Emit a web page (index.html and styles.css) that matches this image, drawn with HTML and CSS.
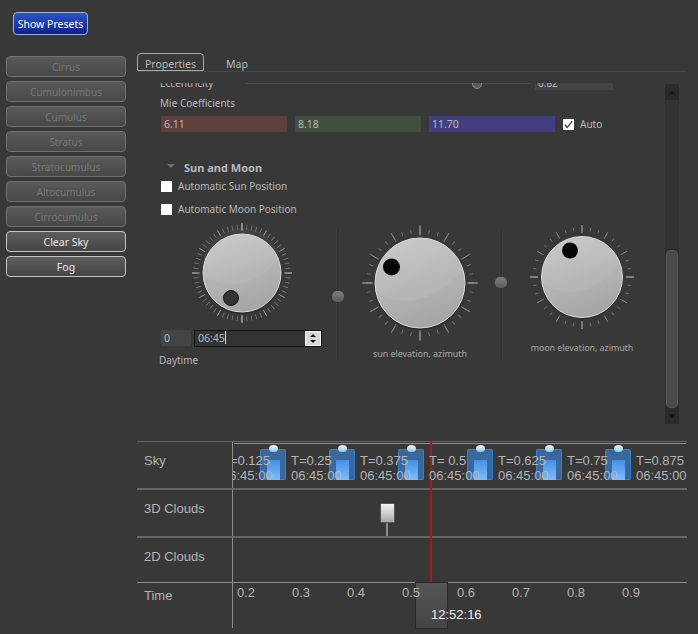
FILE: index.html
```html
<!DOCTYPE html>
<html lang="en">
<head>
    <meta charset="UTF-8">
    <title>Sky Editor</title>
    <link rel="stylesheet" href="styles.css">
</head>
<body>
    <div class="top">
        <button class="show-presets">Show Presets</button>
    </div>
    <div class="workspace">
        <div class="presets">
            <button class="preset" disabled>Cirrus</button>
            <button class="preset" disabled>Cumulonimbus</button>
            <button class="preset" disabled>Cumulus</button>
            <button class="preset" disabled>Stratus</button>
            <button class="preset" disabled>Stratocumulus</button>
            <button class="preset" disabled>Altocumulus</button>
            <button class="preset" disabled>Cirrocumulus</button>
            <button class="preset">Clear Sky</button>
            <button class="preset">Fog</button>
        </div>
        <div class="editor">
            <div class="tabs">
                <div class="tab active">Properties</div>
                <div class="tab">Map</div>
            </div>
            <div class="panel">
                <div class="panel-body">
                    <div class="ecc-row">
                        <span class="ecc-label">Eccentricity</span>
                        <div class="ecc-track"><div class="ecc-handle"></div></div>
                        <div class="ecc-field">0.82</div>
                    </div>
                    <div class="mie-label">Mie Coefficients</div>
                    <div class="mie-row">
                        <div class="mie red">6.11</div>
                        <div class="mie green">8.18</div>
                        <div class="mie blue">11.70</div>
                        <label class="check auto"><span class="box"><svg width="13" height="13" viewBox="0 0 13 13"><path d="M2 6.5 L5 10 L11 2.5" fill="none" stroke="#444" stroke-width="1.6"/></svg></span>Auto</label>
                    </div>
                    <div class="section-head"><span class="triangle"></span>Sun and Moon</div>
                    <label class="check sun-check"><span class="box"></span>Automatic Sun Position</label>
                    <label class="check moon-check"><span class="box"></span>Automatic Moon Position</label>

                    <div class="dials">
                        <div class="dial-col day-col">
                            <svg class="day-dial" width="110" height="110" viewBox="0 0 110 110">
                                <defs>
                                    <linearGradient id="knob" x1="0.3" y1="0" x2="0.6" y2="1">
                                        <stop offset="0" stop-color="#c6c6c6"/>
                                        <stop offset="1" stop-color="#a4a4a4"/>
                                    </linearGradient>
                                </defs>
                                <circle cx="55" cy="55" r="46" fill="none" stroke="#858585" stroke-width="5" pathLength="360" stroke-dasharray="0.9 5.1" stroke-dashoffset="0.45"/>
                                <circle cx="55" cy="55" r="46" fill="none" stroke="#a0a0a0" stroke-width="7" pathLength="360" stroke-dasharray="0.9 29.1" stroke-dashoffset="0.45"/>
                                <circle cx="55" cy="55" r="46" fill="none" stroke="#bdbdbd" stroke-width="8" pathLength="360" stroke-dasharray="1 89" stroke-dashoffset="0.5"/>
                                <circle cx="55" cy="56" r="40" fill="#2c2c2c"/>
                                <circle cx="55" cy="55" r="39" fill="url(#knob)" stroke="#dcdcdc" stroke-width="1"/>
                                <path d="M17 58 Q55 82 93 40 A39 39 0 0 0 17 58Z" fill="#fff" opacity="0.05"/>
                                <circle cx="44" cy="80" r="7.5" fill="#333" stroke="#111" stroke-width="1"/>
                            </svg>
                            <div class="time-row">
                                <div class="day-field">0</div>
                                <div class="spin">
                                    <span class="spin-text">06:45<i class="caret"></i></span>
                                    <div class="spin-btns"><span class="arrow up"></span><span class="arrow down"></span></div>
                                </div>
                            </div>
                            <div class="day-label">Daytime</div>
                        </div>
                        <div class="v-slider"><div class="v-handle sun-handle"></div></div>
                        <div class="dial-col sun-col">
                            <svg width="120" height="120" viewBox="0 0 120 120">
                                <circle cx="60" cy="60" r="52" fill="none" stroke="#747474" stroke-width="4" pathLength="360" stroke-dasharray="1 9" stroke-dashoffset="0.5"/>
                                <circle cx="60" cy="60" r="52.5" fill="none" stroke="#858585" stroke-width="10" pathLength="360" stroke-dasharray="1 29" stroke-dashoffset="0.5"/>
                                <circle cx="60" cy="60" r="52.5" fill="none" stroke="#9c9c9c" stroke-width="10" pathLength="360" stroke-dasharray="1 89" stroke-dashoffset="0.5"/>
                                <circle cx="60" cy="61" r="46" fill="#2c2c2c"/>
                                <circle cx="60" cy="60" r="45" fill="url(#knob)" stroke="#dcdcdc" stroke-width="1"/>
                                <path d="M16 68 Q60 96 103 46 A45 45 0 0 0 16 68Z" fill="#fff" opacity="0.05"/>
                                <circle cx="31.5" cy="44" r="8.5" fill="#050505"/>
                            </svg>
                            <div class="dial-label">sun elevation, azimuth</div>
                        </div>
                        <div class="v-slider moon-slider"><div class="v-handle moon-handle"></div></div>
                        <div class="dial-col moon-col">
                            <svg width="110" height="110" viewBox="0 0 110 110">
                                <circle cx="55" cy="55" r="48" fill="none" stroke="#747474" stroke-width="3.5" pathLength="360" stroke-dasharray="1 9" stroke-dashoffset="0.5"/>
                                <circle cx="55" cy="55" r="48" fill="none" stroke="#858585" stroke-width="8" pathLength="360" stroke-dasharray="1 29" stroke-dashoffset="0.5"/>
                                <circle cx="55" cy="55" r="48" fill="none" stroke="#9c9c9c" stroke-width="8" pathLength="360" stroke-dasharray="1 89" stroke-dashoffset="0.5"/>
                                <circle cx="55" cy="56" r="41.5" fill="#2c2c2c"/>
                                <circle cx="55" cy="55" r="40.5" fill="url(#knob)" stroke="#dcdcdc" stroke-width="1"/>
                                <path d="M15 61 Q55 86 93 42 A40.5 40.5 0 0 0 15 61Z" fill="#fff" opacity="0.05"/>
                                <circle cx="43" cy="28.5" r="8" fill="#050505"/>
                            </svg>
                            <div class="dial-label">moon elevation, azimuth</div>
                        </div>
                    </div>
                </div>
                <div class="scrollbar">
                    <div class="scroll-btn"><span class="arrow up dark"></span></div>
                    <div class="scroll-track"><div class="scroll-thumb"></div></div>
                    <div class="scroll-btn"><span class="arrow down dark"></span></div>
                </div>
            </div>
        </div>
    </div>

    <div class="timeline">
        <div class="row sky-row">
            <div class="row-label">Sky</div>
            <div class="track">
                <div class="sky-bar"></div>
                <div class="clips">
                    <div class="clip"><span class="clip-icon"></span><span class="clip-text">T=0.125<br>06:45:00</span></div>
                    <div class="clip"><span class="clip-icon"></span><span class="clip-text">T=0.25<br>06:45:00</span></div>
                    <div class="clip"><span class="clip-icon"></span><span class="clip-text">T=0.375<br>06:45:00</span></div>
                    <div class="clip"><span class="clip-icon"></span><span class="clip-text">T= 0.5<br>06:45:00</span></div>
                    <div class="clip"><span class="clip-icon"></span><span class="clip-text">T=0.625<br>06:45:00</span></div>
                    <div class="clip"><span class="clip-icon"></span><span class="clip-text">T=0.75<br>06:45:00</span></div>
                    <div class="clip"><span class="clip-text">T=0.875<br>06:45:00</span></div>
                </div>
            </div>
        </div>
        <div class="row clouds-row">
            <div class="row-label">3D Clouds</div>
            <div class="track"><div class="key"></div></div>
        </div>
        <div class="row flat-row">
            <div class="row-label">2D Clouds</div>
            <div class="track"></div>
        </div>
        <div class="row time-ruler">
            <div class="row-label">Time</div>
            <div class="track ticks">
                <span>0.2</span><span>0.3</span><span>0.4</span><span>0.5</span><span>0.6</span><span>0.7</span><span>0.8</span><span>0.9</span>
            </div>
        </div>
        <div class="playhead-line"></div>
        <div class="playhead"></div>
        <div class="playhead-time">12:52:16</div>
    </div>
</body>
</html>
```

FILE: styles.css
```css
* {
    box-sizing: border-box;
}
body {
    margin: 0;
    height: 634px;
    overflow: hidden;
    background: #383838;
    color: #b8b8b8;
    font-family: "Noto Sans", sans-serif;
    font-size: 10px;
}
button {
    font-family: inherit;
    font-size: 10.5px;
    padding: 0;
}

.top {
    height: 53px;
    padding: 12px 0 0 13px;
}
.show-presets {
    display: block;
    width: 75px;
    height: 23px;
    padding-top: 1px;
    color: #fff;
    background: linear-gradient(#2a56c8, #10208c);
    border: 1px solid #9db0d8;
    border-radius: 4px;
}

.workspace {
    display: flex;
    height: 388px;
}
.presets {
    width: 137px;
    padding: 3px 0 0 6px;
    display: flex;
    flex-direction: column;
    gap: 4px;
}
.preset {
    width: 120px;
    height: 21px;
    color: #e8e8e8;
    background: linear-gradient(#5e5e5e, #454545);
    border: 1px solid #c4c4c4;
    border-radius: 4px;
}
.preset:disabled {
    font-size: 10px;
    color: #757575;
    background: linear-gradient(#5a5a5a, #484848);
    border-color: #707070;
}

.editor {
    width: 550px;
}
.tabs {
    display: flex;
    height: 19px;
    border-bottom: 1px solid #474747;
    font-size: 10.5px;
}
.tab {
    height: 18px;
    line-height: 22px;
    padding: 0 22px 0 0;
}
.tab.active {
    width: 67px;
    margin-right: 22px;
    padding: 0;
    text-align: center;
    border: 1px solid #a8a8a8;
    border-radius: 4px 4px 0 0;
    line-height: 20px;
}

.panel {
    display: flex;
    height: 358px;
    margin-top: 11px;
    overflow: hidden;
    position: relative;
}
.panel-body {
    width: 528px;
    margin-top: -8px;
    padding-left: 23px;
}

.ecc-row {
    display: flex;
    height: 14px;
}
.ecc-label {
    width: 85px;
    height: 14px;
    line-height: 16px;
}
.ecc-track {
    width: 286px;
    height: 1px;
    margin-top: 8px;
    background: #4c4c4c;
    position: relative;
}
.ecc-handle {
    position: absolute;
    left: 227px;
    top: -4px;
    width: 10px;
    height: 10px;
    border-radius: 50%;
    background: #5a5a5a;
    border: 1px solid #8a8a8a;
}
.ecc-field {
    width: 78px;
    height: 15px;
    margin-left: 4px;
    padding-left: 3px;
    background: #444;
    line-height: 17px;
}

.mie-label {
    margin-top: 6px;
    height: 16px;
    line-height: 16px;
}
.mie-row {
    display: flex;
    align-items: center;
    gap: 8px;
    margin-top: 5px;
    padding-left: 1px;
    height: 16px;
}
.mie {
    width: 126px;
    height: 16px;
    line-height: 16px;
    padding-left: 3px;
    font-size: 10.5px;
}
.red { background: #5f3e3e; }
.green { background: #3f4f3e; }
.blue { background: #423f80; }

.check {
    display: flex;
    align-items: center;
    gap: 6px;
}
.box {
    width: 11px;
    height: 11px;
    background: #fff;
    display: block;
    flex: none;
}
.box svg {
    display: block;
    width: 11px;
    height: 11px;
}
.section-head {
    display: flex;
    align-items: center;
    margin-top: 27px;
    padding-left: 7px;
    height: 16px;
    font-size: 11px;
    font-weight: 700;
    color: #b8b8b8;
}
.triangle {
    width: 0;
    height: 0;
    margin-right: 9px;
    margin-top: -3px;
    border-left: 4px solid transparent;
    border-right: 4px solid transparent;
    border-top: 4px solid #707070;
}
.check.sun-check {
    margin: 3px 0 0 1px;
    height: 16px;
}
.check.moon-check {
    margin: 7px 0 0 1px;
    height: 16px;
}

.dials {
    display: flex;
    align-items: flex-start;
    margin-top: 1px;
    padding-left: 1px;
}
.dial-col svg {
    display: block;
}
.day-col {
    width: 161px;
}
.day-dial {
    margin-left: 26px;
}
.time-row {
    display: flex;
    gap: 3px;
    margin-top: 2px;
}
.day-field {
    width: 30px;
    height: 16px;
    line-height: 16px;
    padding-left: 3px;
    background: #444;
    font-size: 10.5px;
}
.spin {
    display: flex;
    justify-content: space-between;
    width: 128px;
    height: 17px;
    background: #333;
    border: 1px solid #111;
    font-size: 10.5px;
}
.spin-text {
    padding-left: 3px;
    line-height: 15px;
}
.caret {
    display: inline-block;
    width: 1px;
    height: 13px;
    background: #ddd;
    vertical-align: -2px;
}
.spin-btns {
    width: 16px;
    background: #d8d8d8;
    border: 1px solid #f4f4f4;
    display: flex;
    flex-direction: column;
    align-items: center;
    justify-content: space-evenly;
}
.arrow {
    display: block;
    width: 0;
    height: 0;
    border-left: 3.5px solid transparent;
    border-right: 3.5px solid transparent;
}
.arrow.up {
    border-bottom: 4px solid #111;
}
.arrow.down {
    border-top: 4px solid #111;
}
.spin-btns .arrow {
    border-left-width: 3px;
    border-right-width: 3px;
}
.spin-btns .arrow.up {
    border-bottom-width: 3px;
}
.spin-btns .arrow.down {
    border-top-width: 3px;
}
.arrow.dark.up {
    border-bottom-color: #151515;
}
.arrow.dark.down {
    border-top-color: #151515;
}
.day-label {
    margin: 5px 0 0 -2px;
    height: 16px;
    line-height: 16px;
}

.v-slider {
    position: relative;
    width: 4px;
    height: 134px;
    margin: 10px 0 0 14px;
    background: #323232;
    border: 1px solid #3e3e3e;
    border-radius: 2px;
}
.moon-slider {
    margin-left: 19px;
}
.v-handle {
    position: absolute;
    left: -5px;
    width: 12px;
    height: 11px;
    border-radius: 5px;
    background: linear-gradient(#7d7d7d, #5c5c5c);
}
.sun-handle { top: 62px; }
.moon-handle { top: 48px; }

.sun-col {
    width: 120px;
    margin: 5px 0 0 20px;
}
.moon-col {
    width: 110px;
    margin: 4px 0 0 24px;
}
.dial-label {
    font-size: 8.8px;
    text-align: center;
    white-space: nowrap;
    margin-top: 10px;
    color: #a8a8a8;
}
.sun-col .dial-label {
    margin-top: 4px;
    font-size: 8.9px;
}

.scrollbar {
    width: 14px;
    height: 340px;
    margin: 1px 0 0 0;
    display: flex;
    flex-direction: column;
    background: #313131;
}
.scroll-btn {
    height: 16px;
    flex: none;
    background: #2a2a2a;
    display: flex;
    align-items: center;
    justify-content: center;
}
.scroll-track {
    flex: 1;
    padding: 150px 1px 0;
}
.scroll-thumb {
    height: 158px;
    background: #4a4a4a;
    border: 1px solid #5a5a5a;
    border-radius: 5px;
}

.timeline {
    position: relative;
    margin-left: 137px;
    width: 550px;
    height: 193px;
    font-family: "Liberation Sans", sans-serif;
    font-size: 13px;
    color: #b4b4b4;
}
.row {
    display: flex;
}
.row-label {
    width: 96px;
    padding: 11px 0 0 7px;
    border-right: 1px solid #8c8c8c;
    flex: none;
}
.time-ruler .row-label {
    padding-top: 5px;
}
.track {
    flex: 1;
    position: relative;
    overflow: hidden;
}
.sky-row {
    height: 47px;
    border-top: 1px solid #666;
}
.clouds-row {
    height: 48px;
    border-top: 2px solid #666;
}
.flat-row {
    height: 46px;
    border-top: 2px solid #666;
}
.time-ruler {
    height: 46px;
    border-top: 1px solid #8c8c8c;
}
.sky-bar {
    height: 1px;
    margin: 1px 1px 0 1px;
    background: #a3a000;
}
.clips {
    display: flex;
    margin-left: -11px;
}
.clip {
    position: relative;
    flex: none;
    width: 69px;
    height: 44px;
}
.clip-icon {
    position: absolute;
    left: 38px;
    top: 5px;
    width: 26px;
    height: 31px;
    background: #39699c;
    border: 1px solid #2f7fd0;
    border-radius: 1px;
}
.clip-icon::before {
    content: "";
    position: absolute;
    left: 8px;
    top: -5px;
    width: 9px;
    height: 7px;
    border-radius: 50%;
    background: linear-gradient(#eaf6ff, #8fcdf0);
}
.clip-icon::after {
    content: "";
    position: absolute;
    left: 6px;
    top: 10px;
    width: 13px;
    height: 20px;
    background: linear-gradient(#4590e6, #80bcfb);
}
.clip-text {
    position: absolute;
    left: 0;
    top: 9px;
    white-space: nowrap;
    line-height: 15px;
    z-index: 1;
}
.key {
    position: absolute;
    left: 147px;
    top: 13px;
    width: 15px;
    height: 20px;
    background: linear-gradient(#f4f4f4, #a8a8a8);
    border: 1px solid #555;
    border-radius: 1px;
}
.key::after {
    content: "";
    position: absolute;
    left: 5px;
    top: 19px;
    width: 2px;
    height: 13px;
    background: #8c8c8c;
}
.ticks {
    display: flex;
    padding: 2px 0 0 4px;
    z-index: 1;
}
.ticks span {
    flex: none;
    width: 55px;
}
.playhead-line {
    position: absolute;
    left: 293px;
    top: 0;
    width: 2px;
    height: 142px;
    background: #a31c1c;
}
.playhead {
    position: absolute;
    left: 278px;
    top: 141px;
    width: 33px;
    height: 47px;
    background: linear-gradient(#555, #444);
    border: 1px solid #2a2a2a;
}
.playhead-time {
    position: absolute;
    left: 294px;
    top: 166px;
    color: #f0f0f0;
    z-index: 2;
}
```
